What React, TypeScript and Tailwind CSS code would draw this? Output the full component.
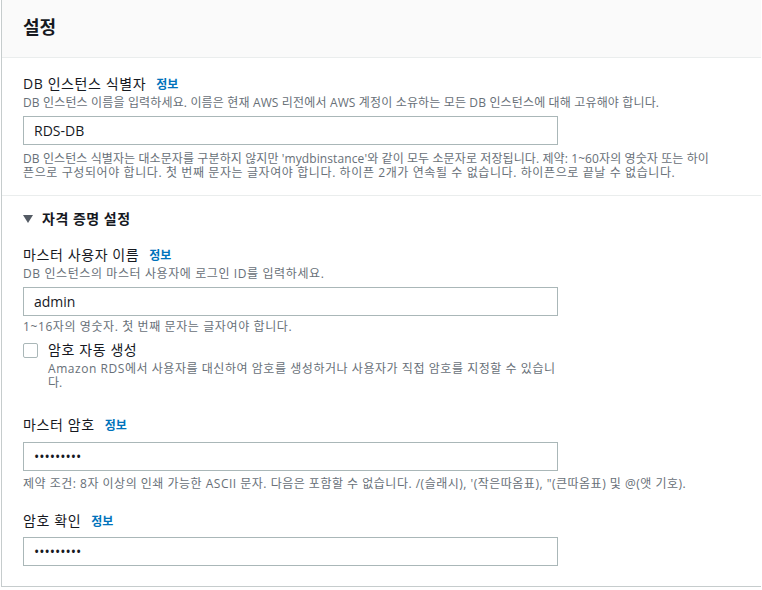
const font = { fontFamily: '"Open Sans", "Noto Sans CJK KR", sans-serif' };

function Info() {
  return <span className="ml-[10px] text-[12px] font-bold tracking-normal text-[#0073bb]">정보</span>;
}

function Field({
  label,
  desc,
  value,
  hint,
  gap = "mt-[5px]",
  hintGap = "mt-[4px]",
}: {
  label: string;
  desc?: React.ReactNode;
  value: string;
  hint?: React.ReactNode;
  gap?: string;
  hintGap?: string;
}) {
  return (
    <div className="flex flex-col">
      <div className="flex items-baseline text-[14px] leading-[20px] tracking-[0.6px] text-[#16191f]">
        {label}
        <Info />
      </div>
      {desc && <p className="text-[12px] leading-[16px] text-[#687078]">{desc}</p>}
      <div className={`${gap} flex h-[29px] w-[535px] items-center border border-[#aab7b8] px-[10px] text-[14px] text-[#16191f]`}>
        {value}
      </div>
      {hint && <div className={`${hintGap} text-[12px] leading-[14px] text-[#687078]`}>{hint}</div>}
    </div>
  );
}

export default function App() {
  return (
    <div className="h-[590px] w-[762px] bg-white" style={font}>
      <div className="ml-[1px] w-[760px] border-b border-l border-[#c6cccd] bg-white">
        <div className="h-[58px] border-b border-[#eaeded] bg-[#fafafa] px-[21px] pt-[14px]">
          <h2 className="text-[18px] font-bold leading-[26px] text-[#16191f]">설정</h2>
        </div>

        <div className="border-b border-[#eaeded] px-[21px] pt-[16px] pb-[15px]">
          <Field
            label="DB 인스턴스 식별자"
            desc={
              <span className="tracking-[0.15px]">
                DB 인스턴스 이름을 입력하세요. 이름은 현재 AWS 리전에서 AWS 계정이 소유하는 모든 DB 인스턴스에 대해 고유해야 합니다.
              </span>
            }
            value="RDS-DB"
            gap="mt-[5px]"
            hintGap="mt-[7px]"
            hint={
              <>
                <p className="tracking-[0.1px]">
                  DB 인스턴스 식별자는 대소문자를 구분하지 않지만 'mydbinstance'와 같이 모두 소문자로 저장됩니다. 제약: 1~60자의 영숫자 또는 하이
                </p>
                <p className="tracking-[0.6px]">
                  픈으로 구성되어야 합니다. 첫 번째 문자는 글자여야 합니다. 하이픈 2개가 연속될 수 없습니다. 하이픈으로 끝날 수 없습니다.
                </p>
              </>
            }
          />
        </div>

        <div className="px-[21px] pt-[13px] pb-[20px]">
          <div className="flex items-center gap-[9px] text-[14px] font-semibold leading-[20px] tracking-[0.5px] text-[#16191f]">
            <svg width="10" height="8" viewBox="0 0 10 8">
              <path d="M0 0h10L5 8z" fill="#545b64" />
            </svg>
            자격 증명 설정
          </div>

          <div className="mt-[16px]">
            <Field
              label="마스터 사용자 이름"
              desc={<span className="tracking-[0.6px]">DB 인스턴스의 마스터 사용자에 로그인 ID를 입력하세요.</span>}
              value="admin"
              hint={<p className="tracking-[0.6px]">1~16자의 영숫자. 첫 번째 문자는 글자여야 합니다.</p>}
            />
          </div>

          <div className="mt-[4px] flex gap-[10px]">
            <div className="mt-[5px] h-[15px] w-[15px] shrink-0 rounded-[2px] border border-[#aab7b8] bg-white" />
            <div className="w-[560px]">
              <div className="text-[14px] leading-[24px] tracking-[0.6px] text-[#16191f]">암호 자동 생성</div>
              <p className="text-[12px] leading-[14px] text-[#687078]">
                <span className="tracking-[0.55px]">
                  Amazon RDS에서 사용자를 대신하여 암호를 생성하거나 사용자가 직접 암호를 지정할 수 있습니
                </span>
                <br />
                다.
              </p>
            </div>
          </div>

          <div className="mt-[25px]">
            <Field
              label="마스터 암호"
              value="•••••••••"
              gap="mt-[6px]"
              hintGap="mt-[6px]"
              hint={
                <p className="tracking-[0.5px]">
                  제약 조건: 8자 이상의 인쇄 가능한 ASCII 문자. 다음은 포함할 수 없습니다. /(슬래시), '(작은따옴표), "(큰따옴표) 및 @(앳 기호).
                </p>
              }
            />
          </div>

          <div className="mt-[20px]">
            <Field label="암호 확인" value="•••••••••" gap="mt-[5px]" />
          </div>
        </div>
      </div>
    </div>
  );
}
